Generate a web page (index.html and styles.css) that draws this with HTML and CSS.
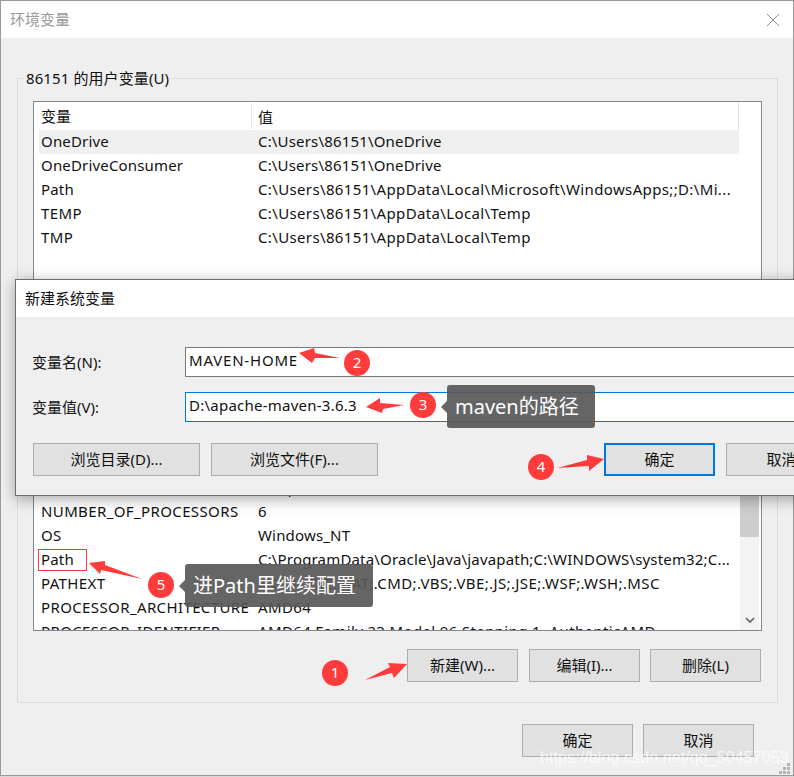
FILE: index.html
```html
<!DOCTYPE html>
<html>
  <head>
    <meta name="viewport" content="width=device-width, initial-scale=1.0">
    <title>环境变量</title>
    <link rel="stylesheet" href="styles.css">
  </head>
  <body>
    <div id="env-window">
      <div class="title-bar">
        <span class="title-text">环境变量</span>
        <svg class="close-icon" width="14" height="14" viewBox="0 0 14 14">
          <path d="M1 1L13 13M13 1L1 13" stroke="#8c8c8c" stroke-width="1" fill="none" />
        </svg>
      </div>
      <div class="group">
        <span class="group-label">86151 的用户变量(U)</span>
        <div class="var-list">
          <div class="list-top">
            <div class="list-head">
              <span>变量</span>
              <span>值</span>
            </div>
            <div class="row row-selected"><span>OneDrive</span><span>C:\Users\86151\OneDrive</span></div>
            <div class="row"><span>OneDriveConsumer</span><span>C:\Users\86151\OneDrive</span></div>
            <div class="row"><span>Path</span><span class="long">C:\Users\86151\AppData\Local\Microsoft\WindowsApps;;D:\Mi...</span></div>
            <div class="row"><span class="caps">TEMP</span><span class="long">C:\Users\86151\AppData\Local\Temp</span></div>
            <div class="row"><span class="caps">TMP</span><span class="long">C:\Users\86151\AppData\Local\Temp</span></div>
          </div>
          <div class="list-bottom">
            <div class="rows">
              <div class="row"><span class="caps">MAVEN_HOME</span><span>D:\apache-maven-3.6.3</span></div>
              <div class="row"><span class="caps">NUMBER_OF_PROCESSORS</span><span>6</span></div>
              <div class="row"><span class="caps">OS</span><span>Windows_NT</span></div>
              <div class="row"><span>Path</span><span>C:\ProgramData\Oracle\Java\javapath;C:\WINDOWS\system32;C...</span></div>
              <div class="row"><span class="caps">PATHEXT</span><span class="caps">.COM;.EXE;.BAT;.CMD;.VBS;.VBE;.JS;.JSE;.WSF;.WSH;.MSC</span></div>
              <div class="row"><span class="caps">PROCESSOR_ARCHITECTURE</span><span class="caps">AMD64</span></div>
              <div class="row"><span class="caps">PROCESSOR_IDENTIFIER</span><span class="long">AMD64 Family 23 Model 96 Stepping 1, AuthenticAMD</span></div>
            </div>
            <div class="scrollbar">
              <div class="scroll-thumb"></div>
              <svg class="scroll-down" width="10" height="7" viewBox="0 0 10 7">
                <path d="M1 1L5 5L9 1" stroke="#606060" stroke-width="1.6" fill="none" />
              </svg>
            </div>
          </div>
        </div>
        <div class="group-buttons">
          <button>新建(W)...</button>
          <button>编辑(I)...</button>
          <button class="delete-btn">删除(L)</button>
        </div>
      </div>
      <div class="window-buttons">
        <button>确定</button>
        <button>取消</button>
      </div>
    </div>

    <div id="new-var-dialog">
      <div class="dialog-title">新建系统变量</div>
      <div class="dialog-body">
        <div class="field">
          <label>变量名(N):</label>
          <input type="text" class="name-input" value="MAVEN-HOME" />
        </div>
        <div class="field">
          <label>变量值(V):</label>
          <input type="text" class="value-input" value="D:\apache-maven-3.6.3" />
        </div>
        <div class="dialog-buttons">
          <button class="browse-btn">浏览目录(D)...</button>
          <button class="browse-btn">浏览文件(F)...</button>
          <button class="ok-btn">确定</button>
          <button class="cancel-btn">取消</button>
        </div>
      </div>
    </div>

    <!-- red annotations drawn over the screenshot -->
    <svg id="arrows" width="794" height="777" viewBox="0 0 794 777">
      <polygon points="299,353 314,348 315,353 340,358 315,358 312,363" />
      <polygon points="366,407 380,398 380,403 404,405 383,409 382,413" />
      <polygon points="604,459 587,455 587,460 557,468 589,466 589,471" />
      <polygon points="89,563 105,561 105,565 142,579 101,570 100,574" />
      <polygon points="407,664 388,663 390,667 365,680 392,673 394,678" />
    </svg>
    <div class="path-box"></div>
    <div class="badge badge-1">1</div>
    <div class="badge badge-2">2</div>
    <div class="badge badge-3">3</div>
    <div class="badge badge-4">4</div>
    <div class="badge badge-5">5</div>
    <div class="note note-maven">maven的路径</div>
    <div class="note note-path">进Path里继续配置</div>
    <div class="watermark">https://blog.csdn.net/qq_50457053</div>
    <svg id="grip" width="11" height="11" viewBox="0 0 11 11">
      <path d="M8 0h3v3H8zM4 4h3v3H4zM8 4h3v3H8zM0 8h3v3H0zM4 8h3v3H4zM8 8h3v3H8z" fill="#b4b4b4" />
    </svg>
  </body>
</html>
```
FILE: styles.css
```css
html,
body {
  margin: 0;
  height: 777px;
  overflow: hidden;
}

body {
  position: relative;
  font-family: "Noto Sans", "Noto Sans CJK SC", sans-serif;
  font-size: 15px;
  color: #111;
  background-color: #d8d8d8;
}

button {
  font-family: inherit;
  font-size: 15px;
  line-height: 20px;
  color: #111;
  background-color: #e1e1e1;
  border: 1px solid #adadad;
  padding: 0 0 2px;
  width: 111px;
  height: 33px;
}

#env-window {
  box-sizing: border-box;
  height: 776px;
  background-color: #efefef;
  border: 1px solid #9a9a9a;
}

.title-bar {
  height: 37px;
  background-color: #ffffff;
  display: flex;
  align-items: center;
  justify-content: space-between;
  padding: 0 13px 0 9px;
}

.title-text {
  color: #9a9a9a;
  padding-bottom: 2px;
}

.group {
  position: relative;
  margin: 40px 15px 0 16px;
  padding: 22px 15px 20px 15px;
  border: 1px solid #dcdcdc;
}

.group-label {
  position: absolute;
  top: -11px;
  left: 6px;
  padding: 0 2px;
  line-height: 21px;
  letter-spacing: 0.1px;
  background-color: #efefef;
}

.var-list {
  box-sizing: border-box;
  height: 530px;
  background-color: #ffffff;
  border: 1px solid #828790;
  display: flex;
  flex-direction: column;
  justify-content: space-between;
  overflow: hidden;
}

.list-top {
  margin: 0 22px 0 5px;
}

.list-head {
  display: grid;
  grid-template-columns: 213px 1fr;
  height: 28px;
  align-items: center;
  border-right: 1px solid #e5e5e5;
}

.list-head span {
  padding-left: 6px;
}

.list-head span:first-child {
  padding-left: 2px;
  line-height: 26px;
  border-right: 1px solid #e5e5e5;
}

.row {
  display: grid;
  grid-template-columns: 217px 1fr;
  height: 24px;
  line-height: 22px;
  letter-spacing: 0.17px;
  white-space: nowrap;
}

.row span {
  padding-left: 2px;
}

.row .caps {
  letter-spacing: 0.38px;
}

.row .long {
  letter-spacing: 0.36px;
}

.row-selected {
  background-color: #f0f0f0;
}

.list-bottom {
  display: flex;
  height: 154px;
  overflow: hidden;
}

.rows {
  flex: 1;
  min-width: 0;
  margin-left: 5px;
}

.scrollbar {
  width: 19px;
  margin-right: 2px;
  background-color: #f3f3f3;
  display: flex;
  flex-direction: column;
  justify-content: space-between;
  align-items: center;
}

.scroll-thumb {
  width: 100%;
  height: 61px;
  background-color: #cdcdcd;
}

.scroll-down {
  margin-bottom: 6px;
}

.group-buttons {
  display: flex;
  justify-content: flex-end;
  gap: 11px;
  margin-top: 18px;
  padding-right: 1px;
}

.delete-btn {
  margin-left: -1px;
}

.window-buttons {
  display: flex;
  justify-content: flex-end;
  gap: 10px;
  margin-top: 21px;
  padding-right: 39px;
}

#new-var-dialog {
  position: absolute;
  top: 279px;
  left: 15px;
  width: 900px;
  background-color: #efefef;
  border: 1px solid #6e6e6e;
  box-shadow: 0 3px 14px rgba(0, 0, 0, 0.35);
}

.dialog-title {
  height: 37px;
  line-height: 37px;
  padding-left: 9px;
  background-color: #ffffff;
}

.dialog-body {
  padding: 30px 16px 19px;
}

.field {
  display: flex;
  align-items: center;
  margin-bottom: 15px;
}

.field label {
  width: 153px;
  padding-bottom: 2px;
}

.field input {
  box-sizing: border-box;
  flex: 1;
  height: 30px;
  padding: 0 3px 4px;
  font-family: inherit;
  font-size: 15px;
  color: #111;
  border: 1px solid #7a7a7a;
  outline: none;
}

.field .name-input {
  letter-spacing: 0.8px;
}

.field .value-input {
  letter-spacing: 0.24px;
  border-color: #0078d7;
}

.dialog-buttons {
  display: flex;
  align-items: flex-start;
  margin-top: 21px;
  padding-left: 1px;
}

.browse-btn {
  width: 167px;
  margin-right: 11px;
}

.ok-btn {
  margin-left: 215px;
  border: 2px solid #0078d7;
}

.cancel-btn {
  margin-left: 11px;
}

#arrows {
  position: absolute;
  top: 0;
  left: 0;
  fill: #ff3b3b;
}

#grip {
  position: absolute;
  top: 763px;
  left: 779px;
}

.path-box {
  position: absolute;
  top: 549px;
  left: 38px;
  width: 47px;
  height: 20px;
  border: 1px solid #f53c3c;
}

.badge {
  position: absolute;
  width: 26px;
  height: 26px;
  line-height: 24px;
  border-radius: 50%;
  background-color: #ff3b3b;
  color: #ffffff;
  text-align: center;
  font-size: 15px;
}

.badge-1 { top: 660px; left: 322px; }
.badge-2 { top: 350px; left: 344px; }
.badge-3 { top: 392px; left: 410px; }
.badge-4 { top: 454px; left: 528px; }
.badge-5 { top: 572px; left: 148px; }

.note {
  position: absolute;
  box-sizing: border-box;
  height: 43px;
  line-height: 43px;
  padding-left: 8px;
  border-radius: 3px;
  background-color: rgba(88, 88, 88, 0.92);
  color: #ffffff;
  font-size: 20px;
  white-space: nowrap;
}

.note::before {
  content: "";
  position: absolute;
  top: 16px;
  left: -6px;
  border-top: 6px solid transparent;
  border-bottom: 6px solid transparent;
  border-right: 6px solid #666666;
}

.note-maven {
  top: 385px;
  left: 447px;
  width: 148px;
}

.note-path {
  top: 564px;
  left: 185px;
  width: 188px;
}

.watermark {
  position: absolute;
  top: 749px;
  left: 540px;
  font-family: "Liberation Sans", sans-serif;
  font-size: 16px;
  letter-spacing: 0.1px;
  color: rgba(255, 255, 255, 0.72);
  white-space: nowrap;
}
```
